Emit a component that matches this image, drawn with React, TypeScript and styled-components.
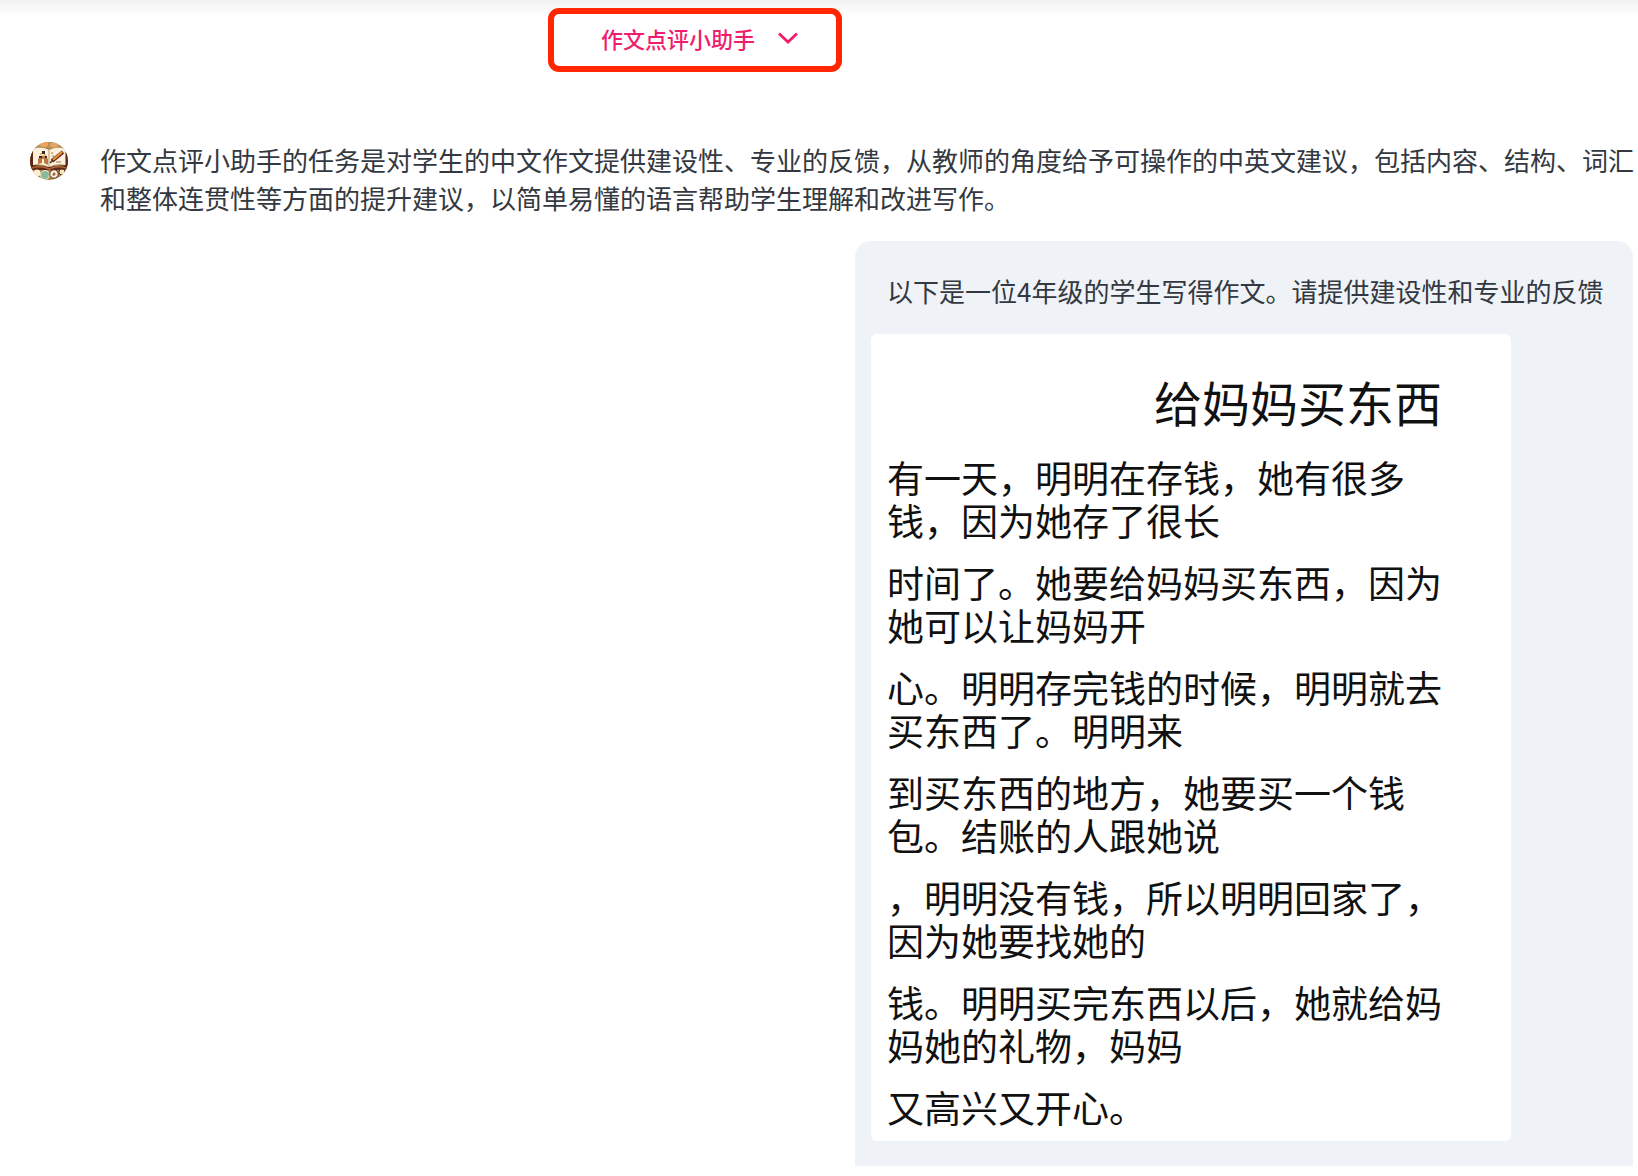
import React from "react";
import styled, { createGlobalStyle } from "styled-components";

const GlobalStyle = createGlobalStyle`
  * { box-sizing: border-box; }
  body {
    margin: 0;
    background: #ffffff;
    font-family: "Noto Sans CJK SC", "Noto Sans", sans-serif;
  }
`;

const Page = styled.div`
  padding-bottom: 10px;
`;

const Header = styled.header`
  display: flex;
  padding: 8px 16px 0 548px;
  height: 141px;
  background: linear-gradient(#f2f2f2, #ffffff 16px);
`;

const AssistantPicker = styled.button`
  display: flex;
  align-items: center;
  justify-content: center;
  gap: 22px;
  width: 294px;
  height: 64px;
  padding: 0 0 4px 10px;
  border: 6px solid #ff2600;
  border-radius: 11px;
  background: #ffffff;
  color: #f01c6c;
  font: inherit;
  font-size: 22px;
  font-weight: 500;
  line-height: 32px;
  cursor: pointer;
`;

const Conversation = styled.main`
  display: flex;
  flex-direction: column;
  gap: 24px;
`;

const AssistantMessage = styled.article`
  display: flex;
  align-items: flex-start;
  gap: 32px;
  padding-left: 30px;
`;

const AvatarPicture = styled.svg`
  flex: none;
  width: 38px;
  height: 38px;
  margin-top: 1px;
`;

const MessageText = styled.p`
  margin: 0;
  color: #343840;
  font-size: 26px;
  line-height: 38px;
`;

const UserMessage = styled.article`
  align-self: flex-end;
  width: 778px;
  max-width: 100%;
  margin-right: 5px;
  padding: 31px 0 25px 16px;
  border-radius: 16px 16px 0 0;
  background: #eff2f7;
`;

const UserText = styled(MessageText)`
  padding-left: 16px;
`;

const Essay = styled.section`
  width: 640px;
  max-width: 100%;
  margin-top: 24px;
  padding: 35px 69px 12px 16px;
  border-radius: 6px;
  background: #ffffff;
  color: #111111;
  text-spacing-trim: space-all;
`;

const EssayTitle = styled.h1`
  margin: 0 0 23px;
  font-size: 48px;
  font-weight: 400;
  line-height: 64px;
  text-align: right;
`;

const EssayBody = styled.div`
  display: flex;
  flex-direction: column;
  gap: 19px;
`;

const Paragraph = styled.p`
  margin: 0;
  font-size: 37px;
  line-height: 43px;
`;

const paragraphs = [
  "有一天，明明在存钱，她有很多钱，因为她存了很长",
  "时间了。她要给妈妈买东西，因为她可以让妈妈开",
  "心。明明存完钱的时候，明明就去买东西了。明明来",
  "到买东西的地方，她要买一个钱包。结账的人跟她说",
  "，明明没有钱，所以明明回家了，因为她要找她的",
  "钱。明明买完东西以后，她就给妈妈她的礼物，妈妈",
  "又高兴又开心。",
];

function Chevron() {
  return (
    <svg width="22" height="22" viewBox="0 0 22 22" fill="none" aria-hidden="true">
      <path d="M2 6.5 11 15 20 6.5" stroke="currentColor" strokeWidth="2.8" />
    </svg>
  );
}

function Avatar() {
  return (
    <AvatarPicture viewBox="0 0 38 38" role="img" aria-label="作文点评小助手">
      <defs>
        <clipPath id="avatar-round">
          <circle cx="19" cy="19" r="19" />
        </clipPath>
      </defs>
      <g clipPath="url(#avatar-round)">
        <rect width="38" height="38" fill="#a98350" />
        <path d="M0 0H38V6H0Z" fill="#b8935c" />
        <ellipse cx="14" cy="2" rx="4" ry="3" fill="#f0a45c" />
        <ellipse cx="24" cy="3" rx="4" ry="2.5" fill="#e9a565" />
        <path d="M0 8 3 7V23L19 25 36 23V7L38 8V28H0Z" fill="#5b2615" />
        <path d="M3 7Q12 4 19 8Q27 4 35 7V23Q26 21 19 25Q11 21 3 23Z" fill="#fbf1dc" />
        <path d="M19 8V25" stroke="#c9a777" strokeWidth="1.2" />
        <path d="M8 22V17Q13 10 18 17V23L14 21V17H12V21Z" fill="#b87842" />
        <path d="M12 9H15V12H12ZM9 14H12V16H9ZM15 14H17V16H15Z" fill="#3b2823" />
        <path d="M10 12H12M14 13H16" stroke="#e5a54d" strokeWidth="1.5" />
        <path d="m22 19 11-9" stroke="#6b2d19" strokeWidth="3.8" />
        <path d="m23 18 9-8" stroke="#e9953f" strokeWidth="2" />
        <path d="m20 21 3-3" stroke="#3b2823" strokeWidth="1.4" />
        <path d="M21 11H23M22 14H24M26 20H31" stroke="#a67245" strokeWidth="1.2" />
        <path d="M2 26Q11 23 19 27Q28 23 36 26" fill="none" stroke="#ad6539" strokeWidth="1.4" />
        <circle cx="7" cy="31" r="3.5" fill="#fff0cc" />
        <circle cx="15" cy="33" r="4.5" fill="#87b99a" stroke="#f6e7be" />
        <circle cx="24" cy="32" r="4.2" fill="#fff7e5" stroke="#5b2a19" />
        <path d="m22 33 2-3 2 2-2 2Z" fill="#a76334" />
        <circle cx="32" cy="30" r="3" fill="#f6e7be" stroke="#633720" />
      </g>
    </AvatarPicture>
  );
}

export default function App() {
  return (
    <Page>
      <GlobalStyle />
      <Header>
        <AssistantPicker type="button" aria-haspopup="listbox">
          <span>作文点评小助手</span>
          <Chevron />
        </AssistantPicker>
      </Header>
      <Conversation>
        <AssistantMessage>
          <Avatar />
          <MessageText>
            作文点评小助手的任务是对学生的中文作文提供建设性、专业的反馈，从教师的角度给予可操作的中英文建议，包括内容、结构、词汇和整体连贯性等方面的提升建议，以简单易懂的语言帮助学生理解和改进写作。
          </MessageText>
        </AssistantMessage>
        <UserMessage>
          <UserText>以下是一位4年级的学生写得作文。请提供建设性和专业的反馈</UserText>
          <Essay>
            <EssayTitle>给妈妈买东西</EssayTitle>
            <EssayBody>
              {paragraphs.map((text) => (
                <Paragraph key={text}>{text}</Paragraph>
              ))}
            </EssayBody>
          </Essay>
        </UserMessage>
      </Conversation>
    </Page>
  );
}
